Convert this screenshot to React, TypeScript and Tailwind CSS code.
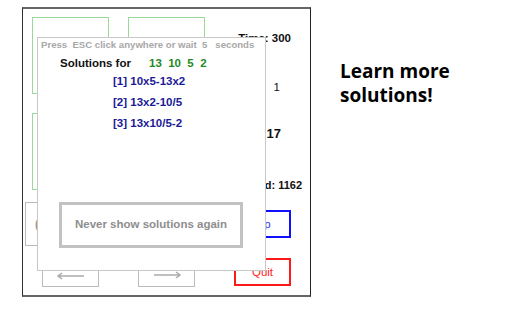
export default function App() {
  const arial = { fontFamily: '"Liberation Sans", Arial, sans-serif' };
  return (
    <div className="w-[512px] h-[320px] bg-white flex" style={arial}>
      {/* game frame */}
      <div className="relative ml-[22px] mt-[7px] w-[289px] h-[290px] border-l border-r border-t-2 border-b-2 border-l-[#333] border-r-[#222] border-t-[#666] border-b-[#666] flex">
        {/* left column */}
        <div className="w-[188px] pl-[2px] pt-[8px] flex flex-col">
          <div className="ml-[7px] grid grid-cols-[77px_77px] gap-x-[19px] gap-y-[19px]">
            <div className="h-[77px] border border-[#9ad99a]" />
            <div className="h-[77px] border border-[#9ad99a]" />
            <div className="h-[77px] border border-[#9ad99a]" />
            <div className="h-[77px] border border-[#9ad99a]" />
          </div>
          <div className="mt-[12px] flex gap-[6px]">
            {['(', '+', '-', 'x', ')'].map((op) => (
              <div
                key={op}
                className="w-[30px] h-[44px] border border-[#bbb] text-[#999] text-[12px] font-bold flex items-center pl-[9px]"
              >
                {op}
              </div>
            ))}
          </div>
          <div className="mt-[16px] flex pl-[17px] gap-[39px]">
            <div className="w-[57px] h-[25px] border border-[#bbb] flex items-center justify-center pt-[3px]">
              <svg width="30" height="8" viewBox="0 0 30 8" fill="none" stroke="#aaa" strokeWidth="1.5">
                <path d="M2 4 H28 M6 1 L2 4 L6 7" />
              </svg>
            </div>
            <div className="w-[57px] h-[25px] border border-[#bbb] flex items-center justify-center pt-[1px]">
              <svg width="30" height="8" viewBox="0 0 30 8" fill="none" stroke="#aaa" strokeWidth="1.5">
                <path d="M2 4 H28 M24 1 L28 4 L24 7" />
              </svg>
            </div>
          </div>
        </div>
        {/* right column */}
        <div className="flex-1 flex flex-col text-[11.5px] font-bold text-[#111] leading-[14px]">
          <div className="mt-[22px] h-[14px] text-right pr-[19px]">Time: 300</div>
          <div className="mt-[35px] h-[14px] text-right pr-[30px] font-normal">1</div>
          <div className="mt-[33px] h-[16px] text-right pr-[29px] text-[13px]">0:17</div>
          <div className="mt-[35px] h-[14px] text-right pr-[8px] text-[11px]">Solved: 1162</div>
          <div className="mt-[18px] ml-auto mr-[19px] w-[57px] h-[28px] border-2 border-[#1010ff] text-[#3030ff] font-normal flex items-center justify-center pr-[6px]">
            Skip
          </div>
          <div className="mt-[20px] ml-auto mr-[19px] w-[57px] h-[28px] border-2 border-[#ff1a1a] text-[#ff2020] font-normal flex items-start justify-center pt-[5px]">
            Quit
          </div>
        </div>

        {/* solutions overlay */}
        <div className="absolute left-[14px] top-[28px] w-[229px] h-[234px] bg-white border border-[#c8c8c8] flex flex-col">
          <div className="mt-[1px] pl-[3px] text-[9.6px] leading-[12px] font-bold text-[#a8a8a8] whitespace-pre">
            {'Press  ESC click anywhere or wait  5   seconds'}
          </div>
          <div className="mt-[5px] pl-[22px] flex text-[11.5px] leading-[14px] font-bold">
            <span className="text-[#111] w-[89px]">Solutions for</span>
            <span className="text-[#1f8a1f] whitespace-pre">{'13  10  5  2'}</span>
          </div>
          <div className="mt-[4px] pl-[75px] flex flex-col gap-[7px] text-[11.5px] leading-[14px] font-bold text-[#1a1a96]">
            <div>[1] 10x5-13x2</div>
            <div>[2] 13x2-10/5</div>
            <div>[3] 13x10/5-2</div>
          </div>
          <div className="mt-[72px] ml-[21px] w-[184px] h-[46px] border-[3px] border-[#c2c2c2] flex items-center justify-center text-[11.5px] font-bold text-[#8e8e8e]">
            Never show solutions again
          </div>
        </div>
      </div>

      {/* caption */}
      <div
        className="ml-[29px] mt-[59px] text-[19px] leading-[24px] font-bold text-black"
        style={{ fontFamily: '"Open Sans", "Noto Sans", sans-serif' }}
      >
        Learn more
        <br />
        solutions!
      </div>
    </div>
  );
}
